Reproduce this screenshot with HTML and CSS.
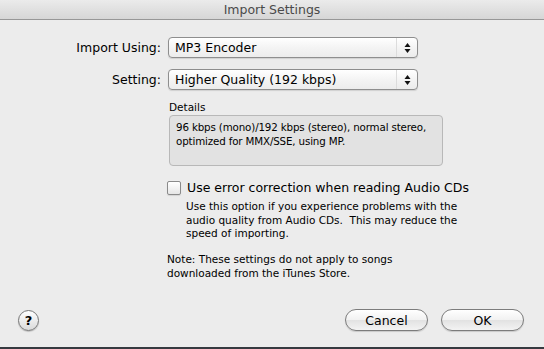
FILE: index.html
```html
<!DOCTYPE html>
<html lang="en">
<head>
  <meta charset="UTF-8" />
  <title>Import Settings</title>
  <link rel="stylesheet" href="styles.css">
</head>
<body>
  <div class="window">
    <div class="titlebar">Import Settings</div>

    <div class="content">
      <div class="field">
        <label class="field-label">Import Using:</label>
        <div class="popup">
          <span class="popup-text">MP3 Encoder</span>
          <span class="popup-arrows">
            <svg width="7" height="12" viewBox="0 0 7 12"><path d="M3.5 1 L6.5 5 L0.5 5 Z M0.5 7 L6.5 7 L3.5 11 Z" fill="#111"/></svg>
          </span>
        </div>
      </div>

      <div class="field">
        <label class="field-label">Setting:</label>
        <div class="popup">
          <span class="popup-text">Higher Quality (192 kbps)</span>
          <span class="popup-arrows">
            <svg width="7" height="12" viewBox="0 0 7 12"><path d="M3.5 1 L6.5 5 L0.5 5 Z M0.5 7 L6.5 7 L3.5 11 Z" fill="#111"/></svg>
          </span>
        </div>
      </div>

      <div class="details">
        <div class="details-label">Details</div>
        <div class="details-box">96 kbps (mono)/192 kbps (stereo), normal stereo, optimized for MMX/SSE, using MP.</div>
      </div>

      <div class="option">
        <div class="check-row">
          <span class="checkbox"></span>
          <span class="check-label">Use error correction when reading Audio CDs</span>
        </div>
        <p class="help-text">Use this option if you experience problems with the audio quality from Audio CDs.&nbsp; This may reduce the speed of importing.</p>
      </div>

      <p class="note">Note: These settings do not apply to songs downloaded from the iTunes Store.</p>
    </div>

    <div class="footer">
      <span class="help-btn">?</span>
      <div class="buttons">
        <button class="btn">Cancel</button>
        <button class="btn">OK</button>
      </div>
    </div>
  </div>
</body>
</html>
```

FILE: styles.css
```css
body {
  margin: 0;
  background: #ececec;
  font-family: 'DejaVu Sans', 'Liberation Sans', sans-serif;
  color: #000;
}

.window {
  width: 544px;
  height: 347px;
  display: flex;
  flex-direction: column;
  border-bottom: 2px solid #363a40;
}

.titlebar {
  height: 19px;
  line-height: 19px;
  text-align: center;
  font-size: 12.5px;
  color: #4a4a4a;
  background: linear-gradient(#ebebeb, #d6d6d6);
  border-bottom: 1px solid #979797;
}

.content {
  flex: 1;
  padding-top: 17px;
}

.field {
  display: grid;
  grid-template-columns: 153px 250px;
  column-gap: 7px;
  align-items: center;
  padding-left: 8px;
  margin-bottom: 11px;
}

.field-label {
  text-align: right;
  font-size: 12.5px;
}

.popup {
  height: 19px;
  display: flex;
  align-items: center;
  border: 1px solid #8e8e8e;
  border-radius: 4px;
  background: linear-gradient(#ffffff, #f4f4f4 50%, #ececec);
  box-shadow: 0 1px 1px rgba(0, 0, 0, 0.12);
}

.popup-text {
  flex: 1;
  padding-left: 6px;
  font-size: 12.5px;
}

.popup-arrows {
  width: 20px;
  height: 100%;
  display: flex;
  align-items: center;
  justify-content: center;
  border-left: 1px solid #dcdcdc;
}

.details {
  margin-left: 169px;
  margin-top: 8px;
  width: 274px;
}

.details-label {
  font-size: 10.5px;
  line-height: 13px;
  margin-bottom: 1px;
}

.details-box {
  height: 41px;
  padding: 4px 4px 4px 6px;
  border: 1px solid #b8b8b8;
  border-radius: 4px;
  background: #e2e2e2;
  font-size: 10.3px;
  letter-spacing: -0.15px;
  line-height: 14px;
}

.option {
  margin-left: 167px;
  margin-top: 14px;
}

.check-row {
  display: flex;
  align-items: center;
  gap: 6px;
  height: 15px;
}

.checkbox {
  width: 12px;
  height: 12px;
  border: 1px solid #8a8a8a;
  border-radius: 2px;
  background: linear-gradient(#ffffff, #e6e6e6);
  box-shadow: 0 1px 1px rgba(0, 0, 0, 0.1);
}

.check-label {
  font-size: 12.5px;
}

.help-text {
  margin: 5px 0 0 19px;
  width: 285px;
  font-size: 10.5px;
  line-height: 13.5px;
}

.note {
  margin: 11px 0 0 167px;
  width: 255px;
  font-size: 10.5px;
  line-height: 14px;
}

.footer {
  display: flex;
  align-items: center;
  justify-content: space-between;
  padding: 0 20px 16px 18px;
}

.help-btn {
  width: 19px;
  height: 19px;
  border: 1px solid #777;
  border-radius: 50%;
  background: linear-gradient(#ffffff, #dadada);
  box-shadow: 0 1px 1px rgba(0, 0, 0, 0.2);
  display: flex;
  align-items: center;
  justify-content: center;
  font-size: 13px;
  font-weight: bold;
}

.buttons {
  display: flex;
  gap: 13px;
}

.btn {
  width: 83px;
  height: 22px;
  border: 1px solid #7c7c7c;
  border-radius: 11px;
  background: linear-gradient(#ffffff, #f1f1f1 50%, #e2e2e2 51%, #f3f3f3);
  box-shadow: 0 1px 1px rgba(0, 0, 0, 0.15);
  font-family: 'DejaVu Sans', 'Liberation Sans', sans-serif;
  font-size: 12.5px;
  color: #000;
  padding: 0;
}
```
